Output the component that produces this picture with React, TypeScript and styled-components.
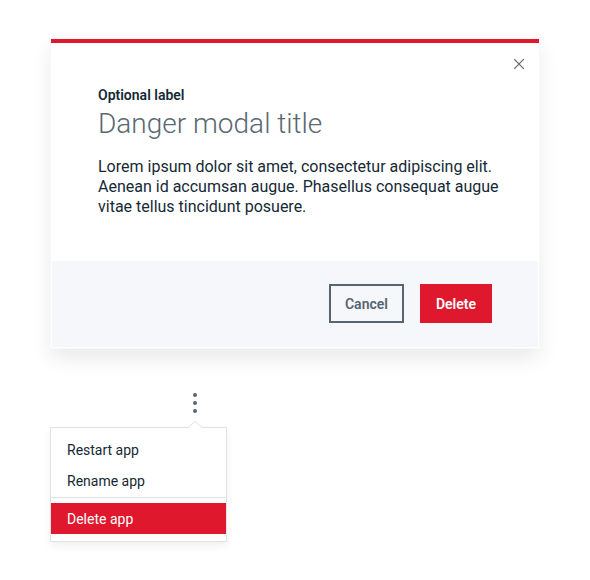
import React from "react";
import styled, { createGlobalStyle } from "styled-components";

const GlobalStyle = createGlobalStyle`
  *, *::before, *::after { box-sizing: border-box; }
  body {
    margin: 0;
    background: #ffffff;
    color: #152935;
    font-family: Roboto, "Noto Sans", sans-serif;
  }
  button { font-family: inherit; cursor: pointer; }
`;

const Page = styled.main`
  display: flex;
  flex-direction: column;
  gap: 40px;
  padding: 39px 51px;
`;

const Modal = styled.section`
  display: flex;
  flex-direction: column;
  position: relative;
  background: #ffffff;
  border-top: 4px solid #e0182d;
  box-shadow: 0 0 0 1px #f8f8f8, 0 10px 20px rgba(0, 0, 0, 0.09);
`;

const CloseButton = styled.button`
  position: absolute;
  top: 12px;
  right: 11px;
  display: flex;
  padding: 2px;
  border: 0;
  background: none;
  color: #5a6872;
`;

const ModalBody = styled.div`
  padding: 43px 36px 44px 47px;
`;

const Label = styled.p`
  margin: 0;
  font-size: 14px;
  font-weight: 600;
  line-height: 18px;
`;

const Title = styled.h2`
  margin: 0;
  color: #5a6872;
  font-size: 28px;
  font-weight: 300;
  line-height: 39px;
`;

const Copy = styled.p`
  margin: 14px 0 0;
  font-size: 16px;
  line-height: 20px;
`;

const ModalFooter = styled.footer`
  display: flex;
  justify-content: flex-end;
  gap: 16px;
  padding: 23px 46px 24px;
  border: 1px solid #ffffff;
  border-top: 0;
  background: #f5f7fb;
`;

const ActionButton = styled.button<{ $danger?: boolean }>`
  height: 39px;
  padding: 0 14px;
  border: 2px solid ${(p) => (p.$danger ? "#e0182d" : "#56656f")};
  background: ${(p) => (p.$danger ? "#e0182d" : "transparent")};
  color: ${(p) => (p.$danger ? "#ffffff" : "#56656f")};
  font-size: 14px;
  font-weight: 600;
`;

const Overflow = styled.div`
  display: flex;
  flex-direction: column;
  width: 177px;
  margin-left: -1px;
`;

const OverflowTrigger = styled.button`
  display: flex;
  align-self: flex-end;
  margin-right: 22px;
  padding: 5px 8px;
  border: 0;
  background: none;
  color: #5a6872;
`;

const Menu = styled.ul`
  position: relative;
  margin: 9px 0 0;
  padding: 6px 0 7px;
  border: 1px solid #dfe3e6;
  background: #ffffff;
  box-shadow: 0 4px 8px rgba(0, 0, 0, 0.06);
  list-style: none;
`;

const Caret = styled.svg`
  position: absolute;
  top: -7px;
  right: 23px;
`;

const MenuItem = styled.li<{ $divided?: boolean }>`
  padding-top: ${(p) => (p.$divided ? "5px" : "0")};
  border-top: ${(p) => (p.$divided ? "1px solid #dfe3e6" : "0")};
  margin-top: ${(p) => (p.$divided ? "1px" : "0")};
`;

const MenuButton = styled.button<{ $danger?: boolean }>`
  display: block;
  width: 100%;
  height: 31px;
  padding: 0 16px;
  border: 0;
  background: ${(p) => (p.$danger ? "#e0182d" : "transparent")};
  color: ${(p) => (p.$danger ? "#ffffff" : "#152935")};
  font-size: 14px;
  text-align: left;
`;

const menuItems = [
  { label: "Restart app", danger: false },
  { label: "Rename app", danger: false },
  { label: "Delete app", danger: true },
];

export default function App() {
  return (
    <>
      <GlobalStyle />
      <Page>
        <Modal role="dialog" aria-labelledby="modal-title">
          <CloseButton type="button" aria-label="Close">
            <svg width="14" height="14" viewBox="0 0 14 14" fill="none" stroke="currentColor">
              <path d="M2.2 2.2 L11.8 11.8 M11.8 2.2 L2.2 11.8" strokeWidth="1.2" />
            </svg>
          </CloseButton>
          <ModalBody>
            <Label>Optional label</Label>
            <Title id="modal-title">Danger modal title</Title>
            <Copy>
              Lorem ipsum dolor sit amet, consectetur adipiscing elit. Aenean id accumsan augue.
              Phasellus consequat augue vitae tellus tincidunt posuere.
            </Copy>
          </ModalBody>
          <ModalFooter>
            <ActionButton type="button">Cancel</ActionButton>
            <ActionButton type="button" $danger>
              Delete
            </ActionButton>
          </ModalFooter>
        </Modal>
        <Overflow>
          <OverflowTrigger type="button" aria-label="App options" aria-expanded="true">
            <svg width="4" height="20" viewBox="0 0 4 20" fill="currentColor">
              <circle cx="2" cy="2" r="2" />
              <circle cx="2" cy="10" r="2" />
              <circle cx="2" cy="18" r="2" />
            </svg>
          </OverflowTrigger>
          <Menu>
            {menuItems.map((item) => (
              <MenuItem key={item.label} $divided={item.danger}>
                {item.label === menuItems[0].label && (
                  <Caret width="16" height="8" viewBox="0 0 16 8" aria-hidden="true">
                    <path d="M1 7 L8 1 L15 7 V8 H1 Z" fill="#ffffff" />
                    <path d="M1 6.5 L8 0.5 L15 6.5" fill="none" stroke="#dfe3e6" />
                  </Caret>
                )}
                <MenuButton type="button" $danger={item.danger}>
                  {item.label}
                </MenuButton>
              </MenuItem>
            ))}
          </Menu>
        </Overflow>
      </Page>
    </>
  );
}
